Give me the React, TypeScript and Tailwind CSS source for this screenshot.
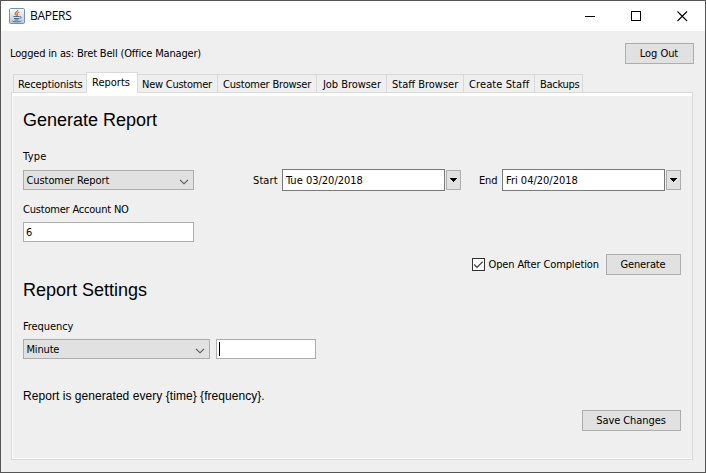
import React from "react";

const UI = "font-['DejaVu_Sans_Condensed','DejaVu_Sans',sans-serif] [font-stretch:condensed]";

const tabs = [
  { name: "Receptionists", box: "w-[73px] pl-1", track: "tracking-[-0.13px]" },
  { name: "Reports", box: "w-[52px] pl-[5px]", track: "tracking-[0px]" },
  { name: "New Customer", box: "w-[79px] pl-1", track: "tracking-[-0.25px]" },
  { name: "Customer Browser", box: "w-[99px] pl-[5px]", track: "tracking-[-0.2px]" },
  { name: "Job Browser", box: "w-[70px] pl-[6px]", track: "tracking-[-0.05px]" },
  { name: "Staff Browser", box: "w-[77px] pl-[5px]", track: "tracking-[0px]" },
  { name: "Create Staff", box: "w-[71px] pl-[5px]", track: "tracking-[0.1px]" },
  { name: "Backups", box: "w-[49px] pl-[5px] border-r", track: "tracking-[-0.3px]" },
];

function JavaIcon() {
  return (
    <svg width="16" height="16" viewBox="0 0 16 16" fill="none">
      <defs>
        <linearGradient id="tile" x1="0" y1="0" x2="0" y2="1">
          <stop stopColor="#fafcfd" />
          <stop offset="1" stopColor="#b6c8d4" />
        </linearGradient>
      </defs>
      <rect x=".5" y=".5" width="15" height="15" rx="1" fill="url(#tile)" stroke="#7892a5" />
      <path d="M8.8 2C9.2 3.4 6 4.1 6.2 5.6c.1.8 1 1.3 1.2 2.1M10.3 4C8.4 4.8 7.7 5.4 8.3 6.2c.5.6.2 1.1-.3 1.6" stroke="#e3702a" strokeWidth="1.3" />
      <path d="M4.5 8.5H10.5M5 10.5H10M5.5 12H9.5M10.8 8.5c1.7-.4 1.8 1.6-.2 2.2M3.5 12.8c0 .8 1.8 1 4 1s4.7-.3 4.7-1.1" stroke="#456f94" strokeWidth="1" />
    </svg>
  );
}

function Button({ children, className }: { children: React.ReactNode; className: string }) {
  return (
    <button className={`flex h-[21px] items-center justify-center border border-[#adadad] bg-[#e1e1e1] pt-px ${className}`}>
      {children}
    </button>
  );
}

function Select({ children, className }: { children: React.ReactNode; className: string }) {
  return (
    <div className={`flex h-5 items-center justify-between border border-[#adadad] bg-[#e1e1e1] pl-[2.5px] pr-1 ${className}`}>
      <span className="mt-[2px]">{children}</span>
      <svg className="mt-[4px]" width="10" height="6" viewBox="0 0 10 6" fill="none">
        <path d="M1 .8L5 4.8L9 .8" stroke="#555" strokeWidth="1.1" />
      </svg>
    </div>
  );
}

function DateField({ children }: { children: React.ReactNode }) {
  return (
    <div className="flex items-center">
      <div className="flex h-[22px] w-[163px] items-center border border-[#7a7a7a] bg-white pl-[3px]">
        <span className="mt-[2px] tracking-[0px]">{children}</span>
      </div>
      <button className="ml-px flex h-5 w-[15px] items-center justify-center border border-[#adadad] bg-[#e1e1e1]">
        <svg width="7" height="4" viewBox="0 0 7 4" shapeRendering="crispEdges">
          <path d="M0 0H7V1H6V2H5V3H4V4H3V3H2V2H1V1H0Z" fill="#000" />
        </svg>
      </button>
    </div>
  );
}

export default function App() {
  return (
    <div className={`flex h-[473px] w-[706px] flex-col overflow-hidden whitespace-nowrap border border-[#555] bg-[#efefef] text-[11px] leading-[14px] tracking-[-0.17px] text-black ${UI}`}>
      <header className="flex h-[30px] shrink-0 items-center bg-white pl-2">
        <JavaIcon />
        <span className="ml-[5px] font-['Open_Sans',sans-serif] text-[12px] tracking-[-0.3px] [font-stretch:normal]">BAPERS</span>
        <div className="ml-auto mr-[17px] flex items-center gap-[35px]">
          <svg width="11" height="11" shapeRendering="crispEdges"><path d="M0 5.5H10" stroke="#000" /></svg>
          <svg width="11" height="11" shapeRendering="crispEdges"><path d="M.5 .5H9.5V9.5H.5Z" fill="none" stroke="#000" /></svg>
          <svg width="11" height="11"><path d="M.5 .5L10 10M10 .5L.5 10" stroke="#000" strokeWidth="1.1" /></svg>
        </div>
      </header>

      <div className="flex h-[41px] shrink-0 justify-between pl-[9px] pr-[11px] pt-3">
        <span className="mt-1">Logged in as: Bret Bell (Office Manager)</span>
        <Button className="w-[69px] pr-px tracking-[-0.05px]">Log Out</Button>
      </div>

      <nav className="z-10 -mb-px flex h-[21px] shrink-0 items-end pl-3">
        {tabs.map((t) => (
          <div
            key={t.name}
            className={`flex shrink-0 border-[#d9d9d9] ${t.box} ${t.track} ${
              t.name === "Reports"
                ? "h-[21px] border-x border-t bg-white pt-[3px]"
                : t.name === "New Customer"
                  ? "mb-px h-[18px] border-t pt-[3px]"
                  : "mb-px h-[18px] border-l border-t pt-[3px]"
            }`}
          >
            {t.name}
          </div>
        ))}
      </nav>

      <main className="ml-[10px] h-[368px] w-[682px] border border-[#d9d9d9] bg-white pb-px pl-px pt-[3px]">
        <div className="flex h-[362px] flex-col bg-[#efefef] pl-[10px] pr-[11px]">
          <h1 className="mt-[13px] font-['Liberation_Sans',sans-serif] text-[18px] leading-[22px] tracking-normal">Generate Report</h1>
          <div className="mt-[19px] tracking-[0.3px]">Type</div>
          <div className="mt-[5px] flex h-[22px] items-center">
            <Select className="w-[171px] tracking-[-0.08px]">Customer Report</Select>
            <span className="ml-[59px] mr-1 mt-[2px] w-[25px] tracking-[0.1px]">Start</span>
            <DateField>Tue 03/20/2018</DateField>
            <span className="ml-[18px] mr-1 mt-[2px] w-[19px]">End</span>
            <DateField>Fri 04/20/2018</DateField>
          </div>
          <div className="mt-3 tracking-[-0.2px]">Customer Account NO</div>
          <div className="mt-[5px] flex h-5 w-[171px] items-center border border-[#adadad] bg-white pl-[2px]">
            <span className="mt-[2px]">6</span>
          </div>
          <div className="mt-3 flex h-[21px] items-center justify-end">
            <svg width="13" height="13" viewBox="0 0 13 13" fill="none">
              <rect x=".5" y=".5" width="12" height="12" fill="#fff" stroke="#333" />
              <path d="M2.2 6.5L5 9.4L10.7 3.6" stroke="#333" strokeWidth="1.2" />
            </svg>
            <span className="ml-[3.5px] w-[117.5px] tracking-[-0.13px]">Open After Completion</span>
            <Button className="w-[75px] pr-px">Generate</Button>
          </div>
          <h2 className="mt-1 font-['Liberation_Sans',sans-serif] text-[18px] leading-[22px] tracking-normal">Report Settings</h2>
          <div className="mt-[19px] tracking-[-0.08px]">Frequency</div>
          <div className="mt-[5px] flex h-5">
            <Select className="w-[187px]">Minute</Select>
            <div className="ml-[6px] flex w-[100px] items-center border border-[#adadad] bg-white pl-[2px]">
              <span className="h-[14px] w-px bg-black" />
            </div>
          </div>
          <p className="mt-[29px] font-['Liberation_Sans',sans-serif] text-[12px] leading-4 tracking-[0.05px]">Report is generated every {"{time} {frequency}"}.</p>
          <div className="mt-[6px] flex justify-end">
            <Button className="w-[99px] pr-px tracking-[-0.08px]">Save Changes</Button>
          </div>
        </div>
      </main>
    </div>
  );
}
